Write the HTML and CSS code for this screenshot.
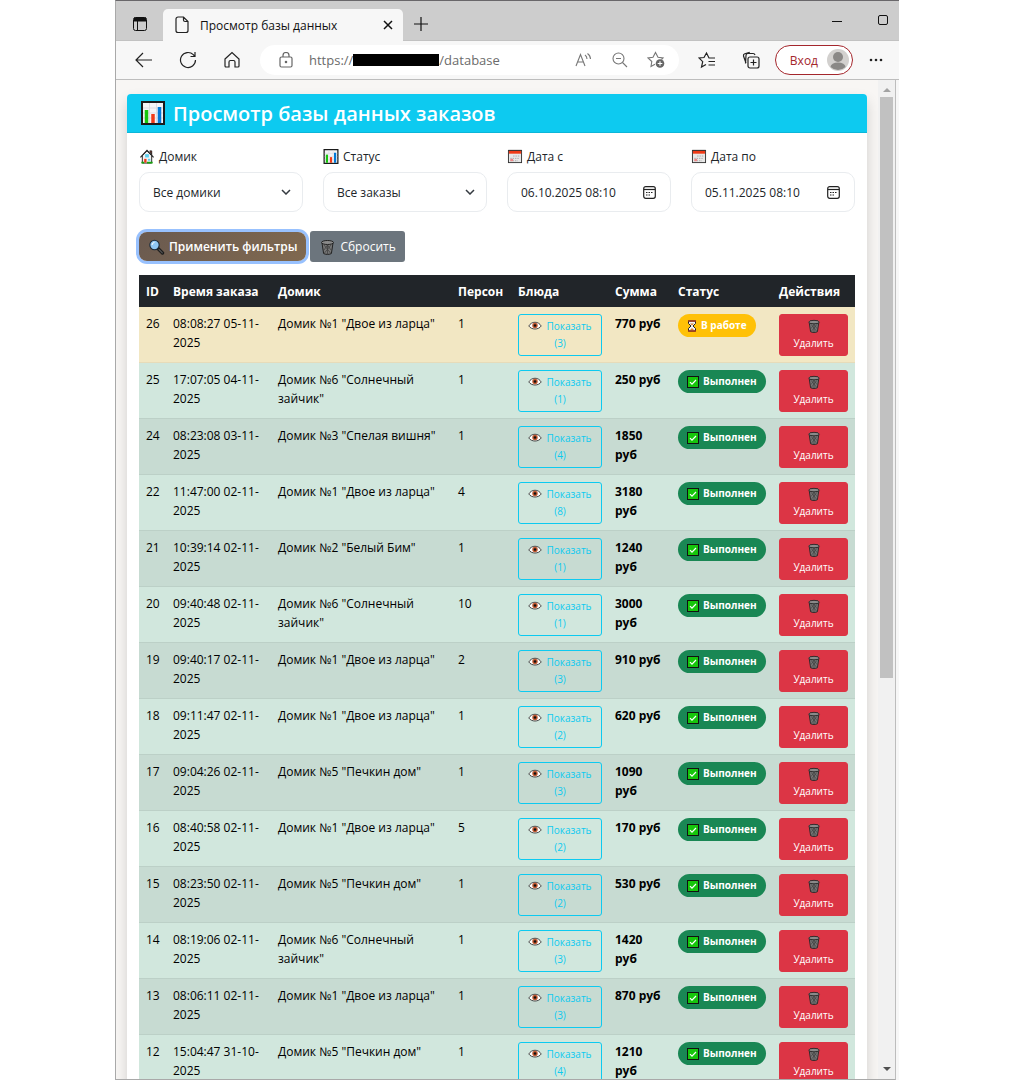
FILE: index.html
```html
<!DOCTYPE html>
<html lang="ru">
<head>
  <meta charset="UTF-8">
  <meta name="viewport" content="width=device-width, initial-scale=1">
  <title>Просмотр базы данных</title>
  <link rel="stylesheet" href="styles.css">
</head>
<body>

  <svg class="sprite" aria-hidden="true">
    <symbol id="i-chart" viewBox="0 0 24 24">
      <rect x="1" y="1" width="22" height="22" fill="#f4f4f6" stroke="#1b1b1b" stroke-width="2"/>
      <path d="M2 7h20M2 12h20M2 17h20M8.500 2v20M15.500 2v20" stroke="#dcdce2" stroke-width="1"/>
      <path d="M5.500 9v13" stroke="#16c60c" stroke-width="3.500"/>
      <path d="M12 13v9" stroke="#f03a17" stroke-width="3.500"/>
      <path d="M18.500 6v16" stroke="#0078d7" stroke-width="3.500"/>
    </symbol>
    <symbol id="i-house" viewBox="0 0 16 16">
      <path d="M3 7v8h10V7L8 2z" fill="#f2f2f2" stroke="#222"/>
      <path d="M11 2h2v4z" fill="#f03a17" stroke="#222"/>
      <path d="M1 9l7-7.500L15 9" fill="none" stroke="#222" stroke-width="1.200"/>
      <rect x="6" y="5.500" width="4" height="3.500" fill="#5ad0f0"/>
      <rect x="5" y="10.500" width="2.500" height="4" fill="#f03a17"/>
      <rect x="9" y="10.500" width="2.500" height="2" fill="#5ad0f0"/>
      <path d="M2 14.500h3M8 14.500h6" stroke="#16a60c" stroke-width="1.800"/>
    </symbol>
    <symbol id="i-calendar" viewBox="0 0 16 16">
      <rect x="1" y="1.500" width="14" height="13" fill="#e8e8e8" stroke="#333"/>
      <rect x="1.500" y="1.500" width="13" height="3.500" fill="#f03a17"/>
      <path d="M1 1.500h14" stroke="#333"/>
      <path d="M6 7.500h7M3 10h10M3 12.500h8" stroke="#aaa" stroke-dasharray="1.500 1"/>
      <path d="M3 10.500h3v2.500H3z" fill="#e88"/>
    </symbol>
    <symbol id="i-search" viewBox="0 0 16 16">
      <path d="M9.500 9.500l4.500 4.500" stroke="#1c1c1c" stroke-width="3.400" stroke-linecap="round"/>
      <path d="M10.500 10.500l3.300 3.300" stroke="#555" stroke-width="1.200" stroke-linecap="round"/>
      <circle cx="6" cy="6" r="4.700" fill="#8fc7f5" stroke="#1c2b3a" stroke-width="1.100"/>
      <path d="M3.500 6a2.800 2.800 0 0 1 2.500-2.600" fill="none" stroke="#fff"/>
    </symbol>
    <symbol id="i-trash" viewBox="0 0 16 16">
      <path d="M2.500 4l1.600 10.500c1.800 1.200 6 1.200 7.800 0L13.500 4z" fill="#767676" stroke="#222"/>
      <path d="M4.500 6l6.500 8M8 6l3.500 5M11.500 6L5 14M8 6l-3.500 5M8 6v9" stroke="#3c3c3c" stroke-width=".7"/>
      <ellipse cx="8" cy="3.500" rx="6" ry="2" fill="#8a8a8a" stroke="#222"/>
    </symbol>
    <symbol id="i-eye" viewBox="0 0 14 11">
      <path d="M.8 6C3.500 1 10.500 1 13.200 6 10.500 10 3.500 10 .8 6z" fill="#fff" stroke="#333" stroke-width=".9"/>
      <circle cx="7" cy="5.500" r="2.700" fill="#c0562e"/>
      <circle cx="7" cy="5.500" r="1.300" fill="#111"/>
    </symbol>
    <symbol id="i-check" viewBox="0 0 12 12">
      <rect x=".5" y=".5" width="11" height="11" fill="#16c60c" stroke="#111"/>
      <path d="M3 6.200l2 2L9 4" fill="none" stroke="#fff" stroke-width="1.200"/>
    </symbol>
    <symbol id="i-glass" viewBox="0 0 10 12">
      <path d="M1.500 1h7v2.500L6 6l2.500 2.500V11h-7V8.500L4 6 1.500 3.500z" fill="#f2f2f2" stroke="#222"/>
      <path d="M1 1h8M1 11h8" stroke="#a33a1c" stroke-width="1.500"/>
      <path d="M3 3.500h4L5 5.500zM3 10l2-2 2 2z" fill="#d9822b"/>
    </symbol>
  </svg>

  <div class="browser">
    <div class="titlebar">
      <button class="tab-actions" aria-label="Меню вкладок">
        <svg width="16" height="16" viewBox="0 0 16 16" fill="none" stroke="#111"><rect x="1.500" y="1.500" width="13" height="13" rx="2"/><path d="M2 3.500h12" stroke-width="4"/><path d="M5.500 5v9"/></svg>
      </button>
      <div class="tab">
        <svg width="14" height="18" viewBox="0 0 14 18" fill="none" stroke="#222" stroke-width="1.200"><path d="M8.500 1H3a2 2 0 0 0-2 2v11.500a2 2 0 0 0 2 2h8a2 2 0 0 0 2-2V5.500zM8.500 1v3a1.500 1.500 0 0 0 1.500 1.500h3"/></svg>
        <span class="tab-title">Просмотр базы данных</span>
        <button aria-label="Закрыть вкладку">
          <svg width="10" height="10" viewBox="0 0 10 10" stroke="#111" stroke-width="1.500"><path d="M1 1l8 8M9 1L1 9"/></svg>
        </button>
      </div>
      <button class="new-tab" aria-label="Новая вкладка">
        <svg width="14" height="14" viewBox="0 0 14 14" stroke="#111" stroke-width="1.200"><path d="M7 0v14M0 7h14"/></svg>
      </button>
      <div class="window-buttons">
        <button aria-label="Свернуть"><svg width="10" height="10" viewBox="0 0 10 10" stroke="#111"><path d="M0 5.500h10"/></svg></button>
        <button aria-label="Развернуть"><svg width="11" height="11" viewBox="0 0 11 11" fill="none" stroke="#111"><rect x=".5" y=".5" width="9" height="9" rx="1.500"/></svg></button>
      </div>
    </div>

    <div class="toolbar">
      <div class="nav-buttons">
        <button aria-label="Назад"><svg width="18" height="18" viewBox="0 0 18 18" fill="none" stroke="#222" stroke-width="1.200"><path d="M17 9H1M8 2L1 9l7 7"/></svg></button>
        <button aria-label="Обновить"><svg width="18" height="18" viewBox="0 0 18 18" fill="none" stroke="#222" stroke-width="1.200"><path d="M16.500 9a7.500 7.500 0 1 1-2.200-5.300L16 5.500M16 1v4.500h-4.500"/></svg></button>
        <button aria-label="Домой"><svg width="18" height="18" viewBox="-1 0 18 18" fill="none" stroke="#222" stroke-width="1.200"><path d="M1 8l7-6.500L15 8v7a1 1 0 0 1-1 1h-3v-5a1.500 1.500 0 0 0-1.500-1.500h-3A1.500 1.500 0 0 0 5 11v5H2a1 1 0 0 1-1-1z"/></svg></button>
      </div>
      <div class="address">
        <svg width="14" height="16" viewBox="0 0 14 16" fill="none" stroke="#666" stroke-width="1.200"><rect x="1" y="5" width="12" height="10" rx="1.500"/><path d="M4 5V3.500a3 3 0 0 1 6 0V5"/><circle cx="7" cy="10" r=".7" fill="#666"/></svg>
        <span class="url">https://<span class="redacted"></span>/database</span>
        <button aria-label="Прочесть вслух"><svg width="18" height="16" viewBox="0 0 18 16" fill="none" stroke="#777" stroke-width="1.100"><path d="M1 14L5.500 2.500 10 14M2.500 10h6M10 3a5 5 0 0 1 2 4M12.500 1.500A7 7 0 0 1 15.500 7"/></svg></button>
        <button aria-label="Масштаб"><svg width="16" height="16" viewBox="0 0 16 16" fill="none" stroke="#777" stroke-width="1.100"><circle cx="6.500" cy="6.500" r="5.500"/><path d="M4 6.500h5M10.500 10.500L15 15"/></svg></button>
        <button aria-label="В избранное"><svg width="18" height="18" viewBox="0 0 18 18" fill="none" stroke="#777" stroke-width="1.100"><path d="M8 13.200L4 15.500l.8-5L1 7l5-.7L8.500 1.500 11 6.300l5 .7-1.500 1.500"/><circle cx="13" cy="12.500" r="4.300" fill="#666" stroke="none"/><path d="M13 10.200v4.600M10.700 12.500h4.600" stroke="#fff"/></svg></button>
      </div>
      <div class="tools">
        <button aria-label="Избранное"><svg width="18" height="18" viewBox="0 0 18 18" fill="none" stroke="#222" stroke-width="1.200"><path d="M17 7h-6L8.500 2 6 6.500 1 7l3.700 3.700L3.500 16 8 13.500M10.500 10.500H17M10.500 14H17"/></svg></button>
        <button aria-label="Коллекции"><svg width="18" height="18" viewBox="0 0 18 18" fill="none" stroke="#222" stroke-width="1.200"><rect x="6" y="6" width="11" height="11" rx="2"/><path d="M11.500 8.500v6M8.500 11.500h6M4 12L1.500 5a2 2 0 0 1 1.300-2.300l5-1.500M3.500 12.500l.5-8a2 2 0 0 1 2-2h5a2 2 0 0 1 2 1.500"/></svg></button>
      </div>
      <button class="login">Вход
        <svg width="22" height="22" viewBox="0 0 22 22"><circle cx="11" cy="11" r="11" fill="#d2d0ce"/><circle cx="11" cy="8" r="5" fill="#8a8886"/><path d="M3.500 18a7.500 4.500 0 0 1 15 0 11 11 0 0 1-15 0z" fill="#8a8886"/></svg>
      </button>
      <button class="more" aria-label="Ещё"><svg width="14" height="4" viewBox="0 0 14 4" fill="#222"><circle cx="2" cy="2" r="1.300"/><circle cx="7" cy="2" r="1.300"/><circle cx="12" cy="2" r="1.300"/></svg></button>
    </div>

    <div class="viewport">
      <main class="page">
        <section class="card">
          <h1><svg class="h-icon"><use href="#i-chart"/></svg>Просмотр базы данных заказов</h1>
          <div class="card-body">
            <form class="filters">
              <div class="field">
                <label for="house"><svg class="icon"><use href="#i-house"/></svg>Домик</label>
                <div class="control">
                  <select id="house"><option>Все домики</option></select>
                  <svg class="chevron" viewBox="0 0 10 6"><path d="M1 1l4 4 4-4"/></svg>
                </div>
              </div>
              <div class="field">
                <label for="status"><svg class="icon"><use href="#i-chart"/></svg>Статус</label>
                <div class="control">
                  <select id="status"><option>Все заказы</option></select>
                  <svg class="chevron" viewBox="0 0 10 6"><path d="M1 1l4 4 4-4"/></svg>
                </div>
              </div>
              <div class="field">
                <label for="from"><svg class="icon"><use href="#i-calendar"/></svg>Дата с</label>
                <div class="control">
                  <input id="from" type="text" value="06.10.2025 08:10">
                  <svg class="picker" viewBox="0 0 13 13"><rect x=".7" y=".7" width="11.600" height="11.600" rx="2"/><path d="M1 3.500h11"/><path d="M3 6.500h7M3 9h5" stroke-dasharray="1.500 1"/></svg>
                </div>
              </div>
              <div class="field">
                <label for="to"><svg class="icon"><use href="#i-calendar"/></svg>Дата по</label>
                <div class="control">
                  <input id="to" type="text" value="05.11.2025 08:10">
                  <svg class="picker" viewBox="0 0 13 13"><rect x=".7" y=".7" width="11.600" height="11.600" rx="2"/><path d="M1 3.500h11"/><path d="M3 6.500h7M3 9h5" stroke-dasharray="1.500 1"/></svg>
                </div>
              </div>
            </form>
            <div class="actions">
              <button class="btn-apply"><svg class="btn-icon"><use href="#i-search"/></svg>Применить фильтры</button>
              <button class="btn-reset"><svg class="btn-icon"><use href="#i-trash"/></svg>Сбросить</button>
            </div>
            <table class="orders">
              <colgroup>
                <col class="c-id"><col class="c-time"><col><col class="c-persons"><col class="c-dishes"><col class="c-sum"><col class="c-status"><col class="c-actions">
              </colgroup>
              <thead>
                <tr><th>ID</th><th>Время заказа</th><th>Домик</th><th>Персон</th><th>Блюда</th><th>Сумма</th><th>Статус</th><th>Действия</th></tr>
              </thead>
              <tbody id="orders"></tbody>
            </table>
          </div>
        </section>
      </main>
      <div class="scrollbar">
        <svg width="8" height="5" viewBox="0 0 8 5"><path d="M0 5l4-4 4 4z" fill="#a3a3a3"/></svg>
        <div class="thumb"></div>
        <svg width="8" height="5" viewBox="0 0 8 5"><path d="M0 0l4 4 4-4z" fill="#505050"/></svg>
      </div>
    </div>
  </div>

  <script src="script.js"></script>
</body>
</html>
```
FILE: styles.css
```css
* { box-sizing: border-box; }
body { margin: 0; padding: 0 137px 0 115px; background: #fff; color: #212529; font-family: "Open Sans", "Noto Sans", sans-serif; font-size: 12px; line-height: 19px; }
button, input, select { font: inherit; color: inherit; }
button { display: flex; align-items: center; justify-content: center; padding: 0; border: 0; background: none; }
svg { flex: none; }
.sprite { position: absolute; width: 0; height: 0; }

/* browser window */
.browser { display: flex; flex-direction: column; height: 100vh; overflow: hidden; border-top: 1px solid #69676a; border-left: 1px solid #a9a9a9; background: #f7f7f7; }
.titlebar { display: flex; align-items: flex-end; height: 40px; padding-left: 16px; background: #cdcdcd; border-bottom: 1px solid #c2c2c2; }
.tab-actions { width: 16px; height: 32px; }
.tab { display: flex; align-items: center; width: 240px; height: 32px; margin: 0 0 -1px 15px; padding: 0 10px 0 12px; border-radius: 5px 5px 0 0; background: #f7f7f7; }
.tab-title { flex: 1; margin-left: 11px; color: #111; font-size: 12px; }
.new-tab { width: 14px; height: 32px; margin-left: 11px; }
.window-buttons { display: flex; gap: 36px; align-items: center; height: 39px; margin: 0 10px 0 auto; }

.toolbar { display: flex; align-items: center; height: 39px; padding: 0 16px 0 19px; border-bottom: 1px solid #bdbdbd; }
.nav-buttons { display: flex; gap: 26px; margin-right: 19px; }
.address { display: flex; flex: 1; align-items: center; gap: 19px; height: 30px; padding: 0 14px 0 19px; border-radius: 15px; background: #fff; color: #6b6b6b; font-size: 13px; }
.url { display: flex; flex: 1; align-items: center; margin-left: -3px; }
.redacted { width: 86px; height: 12px; background: #000; }
.tools { display: flex; gap: 26px; margin: 0 15px 0 19px; }
.login { gap: 9px; height: 30px; padding: 0 3px 0 14px; border: 1px solid #a4262c; border-radius: 15px; background: #fff; color: #a4262c; font-size: 12px; }
.more { margin-left: 16px; }

.viewport { display: flex; flex: 1; min-height: 0; margin-right: 3px; border-right: 1px solid #bdbdbd; border-bottom: 1px solid #a9a9a9; }
.scrollbar { display: flex; flex-direction: column; align-items: center; width: 17px; padding: 7px 0; background: #f1f1f1; }
.thumb { width: 13px; height: 59%; margin: 5px 0 auto; background: #c1c1c1; }

/* page */
.page { flex: 1; overflow: hidden; padding: 14px 11px 0; background: #f8f6f4; }
.card { border-radius: 4px; background: #fff; box-shadow: 0 7px 14px rgba(0, 0, 0, .16); }
h1 { display: flex; align-items: center; gap: 8px; height: 39px; margin: 0; padding: 0 14px; border-bottom: 1px solid #0cb6d8; border-radius: 4px 4px 0 0; background: #0dcaf0; color: #fff; font-size: 20px; font-weight: 600; }
.h-icon { width: 24px; height: 24px; }
.card-body { padding: 14px 12px; }

.filters { display: grid; grid-template-columns: repeat(4, minmax(0, 1fr)); gap: 20px; }
.field label { display: flex; align-items: center; gap: 4px; height: 19px; margin-bottom: 6px; }
.icon { width: 16px; height: 15px; }
.control { display: flex; align-items: center; height: 40px; padding: 0 13px; border: 1px solid #e9ecef; border-radius: 10px; background: #fff; }
.control select, .control input { flex: 1; min-width: 0; height: 100%; padding: 0; border: 0; outline: 0; background: none; appearance: none; }
.chevron { width: 10px; height: 6px; margin-right: -2px; fill: none; stroke: #343a40; stroke-width: 1.500; }
.picker { width: 13px; height: 13px; margin-right: 1px; fill: none; stroke: #222; stroke-width: 1.200; }

.actions { display: flex; align-items: center; gap: 4px; margin: 19px 0 13px; }
.btn-apply, .btn-reset { gap: 4px; padding: 0 9px; color: #fff; }
.btn-apply { height: 29px; border-radius: 8px; background: linear-gradient(135deg, #6a5a50, #80694f); box-shadow: 0 0 0 3px #98c1fe; font-weight: 600; }
.btn-reset { height: 31px; border-radius: 3px; background: #6c757d; }
.btn-icon { width: 17px; height: 16px; }

/* orders table */
.orders { width: 100%; table-layout: fixed; border-collapse: separate; border-spacing: 0; color: #000; }
.c-id { width: 27px; }
.c-time { width: 105px; }
.c-persons { width: 60px; }
.c-dishes { width: 97px; }
.c-sum { width: 63px; }
.c-status { width: 101px; }
.c-actions { width: 83px; }
.orders th { height: 32px; padding: 0 0 0 7px; background: #212529; color: #fff; font-weight: 700; text-align: left; white-space: nowrap; }
.orders td { height: 56px; padding: 7px 6px 6px 7px; border-bottom: 1px solid #bcd0c7; vertical-align: top; }
.orders td:first-child { padding-right: 0; }
.orders td:last-child { padding-right: 7px; }
.orders .done td { background: #d1e7dd; }
.orders .done:nth-child(odd) td { background: #c7dbd2; }
.orders .work td { background: #f2e7c3; border-color: #e6dbb9; }
.orders .sum { font-weight: 700; }
.btn-show, .btn-delete { display: block; width: 100%; height: 42px; padding: 3px 4px; border: 1px solid #0dcaf0; border-radius: 3px; color: #0dcaf0; font-size: 10px; line-height: 17px; text-align: center; }
.btn-delete { border-color: #dc3545; background: #dc3545; color: #fff; }
.btn-show svg { width: 14px; height: 11px; margin-right: 4px; vertical-align: -1px; }
.btn-delete svg { display: block; width: 14px; height: 14px; margin: 1px auto 2px; }
.badge { display: inline-flex; align-items: center; gap: 4px; height: 23px; padding: 0 9px; border-radius: 12px; background: #198754; color: #fff; font-size: 10px; font-weight: 700; white-space: nowrap; }
.badge svg { width: 12px; height: 12px; }
.work .badge { background: #ffc107; }
.work .badge svg { width: 10px; }
```
FILE: script.js
```js
const houses = {
  1: 'Домик №1 "Двое из ларца"',
  2: 'Домик №2 "Белый Бим"',
  3: 'Домик №3 "Спелая вишня"',
  5: 'Домик №5 "Печкин дом"',
  6: 'Домик №6 "Солнечный зайчик"'
};

// id, time, house, persons, dishes, sum
const orders = [
  [26, "08:08:27 05-11-2025", 1, 1, 3, 770],
  [25, "17:07:05 04-11-2025", 6, 1, 1, 250],
  [24, "08:23:08 03-11-2025", 3, 1, 4, 1850],
  [22, "11:47:00 02-11-2025", 1, 4, 8, 3180],
  [21, "10:39:14 02-11-2025", 2, 1, 1, 1240],
  [20, "09:40:48 02-11-2025", 6, 10, 1, 3000],
  [19, "09:40:17 02-11-2025", 1, 2, 3, 910],
  [18, "09:11:47 02-11-2025", 1, 1, 2, 620],
  [17, "09:04:26 02-11-2025", 5, 1, 3, 1090],
  [16, "08:40:58 02-11-2025", 1, 5, 2, 170],
  [15, "08:23:50 02-11-2025", 5, 1, 2, 530],
  [14, "08:19:06 02-11-2025", 6, 1, 3, 1420],
  [13, "08:06:11 02-11-2025", 1, 1, 3, 870],
  [12, "15:04:47 31-10-2025", 5, 1, 4, 1210]
];

const inWork = [26];

document.getElementById("orders").innerHTML = orders.map(([id, time, house, persons, dishes, sum]) => {
  const work = inWork.includes(id);
  return `<tr class="${work ? "work" : "done"}">
    <td>${id}</td>
    <td>${time}</td>
    <td>${houses[house]}</td>
    <td>${persons}</td>
    <td><button class="btn-show"><svg><use href="#i-eye"/></svg>Показать (${dishes})</button></td>
    <td class="sum">${sum} руб</td>
    <td><span class="badge"><svg><use href="#${work ? "i-glass" : "i-check"}"/></svg>${work ? "В работе" : "Выполнен"}</span></td>
    <td><button class="btn-delete"><svg><use href="#i-trash"/></svg>Удалить</button></td>
  </tr>`;
}).join("");
```
